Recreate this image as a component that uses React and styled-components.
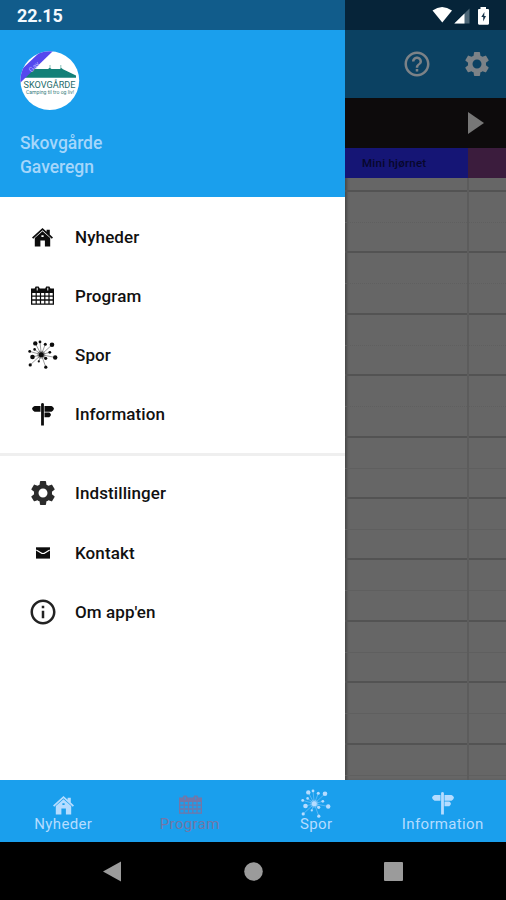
import React from "react";
import styled, { createGlobalStyle } from "styled-components";
import { MdSettings, MdHelpOutline, MdInfoOutline } from "react-icons/md";

const GlobalStyle = createGlobalStyle`
  * {
    box-sizing: border-box;
  }

  body {
    margin: 0;
    background: #000;
    font-family: Roboto, "Liberation Sans", sans-serif;
  }

  svg {
    display: block;
    flex: none;
  }
`;

const Screen = styled.div`
  width: 506px;
  height: 900px;
  display: flex;
  flex-direction: column;
  overflow: hidden;
`;

const StatusBar = styled.div`
  flex: none;
  height: 30px;
  display: grid;
  grid-template-columns: 345px 1fr;
`;

const Clock = styled.div`
  padding-left: 17px;
  background: #115c8b;
  color: #f4f9fd;
  font-size: 18px;
  font-weight: 700;
  line-height: 32px;
  letter-spacing: -0.2px;
`;

const StatusIcons = styled.div`
  display: flex;
  justify-content: flex-end;
  align-items: center;
  padding-right: 16px;
  background: #062439;
`;

const Main = styled.div`
  flex: none;
  height: 750px;
  display: flex;
`;

const Drawer = styled.div`
  flex: none;
  width: 345px;
  background: #fff;
`;

const DrawerHeader = styled.div`
  height: 167px;
  padding: 21px 20px 0;
  background: #1a9fed;
`;

const CampName = styled.div`
  margin-top: 20px;
  color: #a4d6fb;
  font-size: 17.5px;
  font-weight: 500;
  line-height: 24px;
  letter-spacing: -0.05px;
`;

const MenuGroup = styled.div`
  padding: 10.5px 0 9px;

  & + & {
    border-top: 3px solid #efefef;
    padding-top: 8px;
  }
`;

const MenuItem = styled.div`
  height: 59.1px;
  display: flex;
  align-items: center;
`;

const MenuIcon = styled.div`
  width: 75px;
  padding: 0 8px 0 18px;
  display: flex;
  justify-content: center;
  color: ${({ $color }) => $color || "#0c0c0c"};
`;

const MenuLabel = styled.div`
  color: #111;
  font-size: 17px;
  font-weight: 500;
  letter-spacing: 0.1px;
`;

const Page = styled.div`
  flex: 1;
  display: flex;
  flex-direction: column;
  overflow: hidden;
  box-shadow: inset 3px 0 3px -1px rgba(0, 0, 0, 0.3);
  background: #666;
`;

const AppBar = styled.div`
  height: 68px;
  display: flex;
  justify-content: flex-end;
  align-items: center;
  gap: 30px;
  padding-right: 14px;
  background: #0b4162;
  color: #7c8287;
`;

const DayBar = styled.div`
  height: 50px;
  display: flex;
  justify-content: flex-end;
  align-items: center;
  padding-right: 22px;
  background: #0d0b0c;
`;

const Rooms = styled.div`
  height: 30px;
  display: flex;
`;

const Room = styled.div`
  width: ${({ $width }) => $width};
  padding-left: 17px;
  background: ${({ $color }) => $color};
  color: #07072c;
  font-size: 11.5px;
  font-weight: 500;
  line-height: 31px;
  letter-spacing: 0.25px;
`;

const Schedule = styled.div`
  flex: 1;
  display: grid;
  grid-template-columns: 122px 1fr;
  overflow: hidden;
`;

const Track = styled.div`
  padding-top: 12px;
  overflow: hidden;

  & + & {
    border-left: 2px solid #5c5c5c;
  }
`;

const HourSlot = styled.div`
  height: 61.4px;
  border-top: 2px solid #535353;

  &::before {
    content: "";
    display: block;
    height: 30px;
    border-bottom: 1px ${({ $faint }) => ($faint ? "dotted" : "solid")} #5f5f5f;
  }
`;

const TabBar = styled.div`
  flex: none;
  height: 62px;
  display: grid;
  grid-template-columns: repeat(4, 1fr);
  background: #1a9fed;
`;

const Tab = styled.div`
  display: flex;
  flex-direction: column;
  align-items: center;
  color: ${({ $active }) => ($active ? "#7277a8" : "#b5dcff")};
`;

const TabIcon = styled.div`
  height: 34px;
  padding-top: ${({ $top }) => $top}px;
  padding-left: ${({ $left }) => $left || 0}px;
`;

const TabLabel = styled.div`
  font-size: 15px;
  line-height: 21px;
  letter-spacing: 0.35px;
`;

const SystemNav = styled.div`
  flex: none;
  height: 58px;
  display: grid;
  grid-template-columns: repeat(3, 140.7px);
  justify-content: center;
  align-items: center;
  justify-items: center;
  background: #000;
  color: #9b9b9b;
`;

const HomeIcon = () => (
  <svg width="21" height="19" viewBox="0 0 21 19" fill="currentColor">
    <path d="M10.5 0 L14.6 3.7 V1.8 H17.8 V6.6 L21 9.5 L19.8 10.7 L10.5 2.3 L1.2 10.7 L0 9.5 Z" />
    <path
      fillRule="evenodd"
      d="M10.5 3.2 L18.2 10 V18.5 H12.9 V12.6 H8.4 V18.5 H2.8 V10 Z M9.4 7.2 V9 H11.6 V7.2 Z"
    />
  </svg>
);

const CalendarIcon = () => (
  <svg width="23" height="20" viewBox="0 0 23 20" fill="currentColor">
    <path
      fillRule="evenodd"
      d="M0 2.6 H3.6 L4.6 0.4 H7.6 L8.8 2.6 H14.2 L15.2 0.4 H18.4 L19.4 2.6 H23 V18.8 H0 Z
      M1.3 7 V9.4 H4.6 V7 Z M5.8 7 V9.4 H8.9 V7 Z M10.1 7 V9.4 H13.2 V7 Z M14.4 7 V9.4 H17.4 V7 Z M18.6 7 V9.4 H21.7 V7 Z
      M1.3 10.8 V13.3 H4.6 V10.8 Z M5.8 10.8 V13.3 H8.9 V10.8 Z M10.1 10.8 V13.3 H13.2 V10.8 Z M14.4 10.8 V13.3 H17.4 V10.8 Z M18.6 10.8 V13.3 H21.7 V10.8 Z
      M1.3 14.7 V17.4 H4.6 V14.7 Z M5.8 14.7 V17.4 H8.9 V14.7 Z M10.1 14.7 V17.4 H13.2 V14.7 Z M14.4 14.7 V17.4 H17.4 V14.7 Z M18.6 14.7 V17.4 H21.7 V14.7 Z
      M5.7 1.8 V4.4 H6.7 V1.8 Z M16.3 1.8 V4.4 H17.3 V1.8 Z"
    />
  </svg>
);

// x, y, radius of each dot around the hub
const dots = [
  [7.3, 3.4, 2.2],
  [12, 1.9, 1.4],
  [17.3, 4.3, 1.5],
  [24, 4.8, 2.3],
  [1.7, 11.4, 1.4],
  [6.6, 9.4, 1.3],
  [21.8, 12.3, 1.4],
  [4.5, 17, 2.3],
  [27.2, 17.5, 2.2],
  [17.7, 18.3, 1.6],
  [2.2, 24.9, 1.6],
  [10.8, 21.4, 1.1],
  [17.8, 27.2, 1.6],
];

const BurstIcon = () => (
  <svg width="30" height="30" viewBox="0 0 30 30" fill="currentColor">
    {dots.map(([x, y, r]) => (
      <g key={`${x}-${y}`}>
        <line
          x1="13.3"
          y1="14.7"
          x2={x}
          y2={y}
          stroke="currentColor"
          strokeWidth="0.8"
          opacity="0.5"
        />
        <circle cx={x} cy={y} r={r} />
      </g>
    ))}
    <circle cx="13.3" cy="14.7" r="4" opacity="0.3" />
    <circle cx="13.3" cy="14.7" r="2.5" />
  </svg>
);

const SignIcon = () => (
  <svg width="22" height="23" viewBox="0 0 22 23" fill="currentColor">
    <path d="M9.1 0.8 Q10.5 -0.6 11.9 0.8 V22.5 H9.1 Z" />
    <path d="M2.6 3 H8.5 V8.7 H2.6 Q0.6 8 0 5.8 Q0.6 3.6 2.6 3 Z" />
    <path d="M12.5 3 H19.5 Q21.4 3.8 22 5.8 Q21.4 8 19.5 8.7 H12.5 Z" />
    <path d="M12.5 9.6 H17.3 Q18.7 10.4 19 11.8 Q18.7 13.3 17.3 14.2 H12.5 Z" />
  </svg>
);

const MailIcon = () => (
  <svg width="14" height="12" viewBox="0 0 14 12" fill="currentColor">
    <rect width="14" height="11.3" y="0.3" />
    <path d="M0.3 3 L4.8 5.7 Q7 7.3 9.2 5.7 L13.7 3" fill="none" stroke="#fff" strokeWidth="1.1" />
  </svg>
);

const Logo = () => (
  <svg width="60" height="60" viewBox="0 0 60 60">
    <defs>
      <clipPath id="logoClip">
        <circle cx="29.8" cy="29.6" r="29.4" />
      </clipPath>
    </defs>
    <g clipPath="url(#logoClip)">
      <rect width="60" height="60" fill="#fff" />
      <path
        d="M3 26.8 L14 18 H28 L29.8 16.8 L31.5 18 H40 L41 16.8 L43 18.3 L56 24.5 V26.8 Z"
        fill="#138078"
      />
      <path d="M30 17 V14 M40.8 17 V14" stroke="#6cb0a8" strokeWidth="0.8" />
      <path d="M0 20 L21 0 H33 L0 32 Z" fill="#5548ee" />
      <text x="8" y="19" fill="#b9b5ff" fontSize="7" transform="rotate(-45 13 16)">
        Gav
      </text>
      <text
        x="3.5"
        y="37.2"
        fill="#266b6b"
        fontSize="9.4"
        textLength="52"
        lengthAdjust="spacingAndGlyphs"
      >
        SKOVGÅRDE
      </text>
      <text
        x="6"
        y="43.2"
        fill="#397d7d"
        fontSize="5.4"
        textLength="48"
        lengthAdjust="spacingAndGlyphs"
      >
        Camping til tro og liv!
      </text>
    </g>
  </svg>
);

const SignalIcons = () => (
  <svg width="58" height="20" viewBox="0 0 58 20">
    <path d="M0.5 4.4 Q10 -2.6 20 4.4 L10.3 16.6 Z" fill="#fff" />
    <path d="M37.5 2.4 V17.6 H22.3 Z" fill="#4d6677" />
    <path d="M32.5 7.4 V17.6 H22.3 Z" fill="#fff" />
    <path
      d="M48.5 1 H54 V3 H56 Q57 3 57 4 V17.6 Q57 18.7 56 18.7 H47 Q46 18.7 46 17.6 V4 Q46 3 47 3 H48.5 Z"
      fill="#fff"
    />
    <path d="M52.4 6 L49.3 11 H51.2 V15.4 L54 10 H52.2 Z" fill="#17344a" />
  </svg>
);

const mainMenu = [
  { label: "Nyheder", icon: <HomeIcon /> },
  { label: "Program", icon: <CalendarIcon /> },
  { label: "Spor", icon: <BurstIcon /> },
  { label: "Information", icon: <SignIcon /> },
];

const extraMenu = [
  { label: "Indstillinger", icon: <MdSettings size={30} />, color: "#2b2b2b" },
  { label: "Kontakt", icon: <MailIcon /> },
  { label: "Om app'en", icon: <MdInfoOutline size={30} />, color: "#222" },
];

const tabs = [
  { label: "Nyheder", icon: <HomeIcon />, top: 16 },
  { label: "Program", icon: <CalendarIcon />, top: 15, left: 2, active: true },
  { label: "Spor", icon: <BurstIcon />, top: 9 },
  { label: "Information", icon: <SignIcon />, top: 11.5 },
];

const hours = [0, 1, 2, 3, 4, 5, 6, 7, 8, 9];

const Menu = ({ items }) => (
  <MenuGroup>
    {items.map((item) => (
      <MenuItem key={item.label}>
        <MenuIcon $color={item.color}>{item.icon}</MenuIcon>
        <MenuLabel>{item.label}</MenuLabel>
      </MenuItem>
    ))}
  </MenuGroup>
);

const App = () => {
  return (
    <>
      <GlobalStyle />
      <Screen>
        <StatusBar>
          <Clock>22.15</Clock>
          <StatusIcons>
            <SignalIcons />
          </StatusIcons>
        </StatusBar>

        <Main>
          <Drawer>
            <DrawerHeader>
              <Logo />
              <CampName>
                Skovgårde
                <br />
                Gaveregn
              </CampName>
            </DrawerHeader>
            <Menu items={mainMenu} />
            <Menu items={extraMenu} />
          </Drawer>

          <Page>
            <AppBar>
              <MdHelpOutline size={30} />
              <MdSettings size={30} />
            </AppBar>
            <DayBar>
              <svg width="16" height="22" viewBox="0 0 16 22">
                <path d="M0 0 L16 11 L0 22 Z" fill="#777" />
              </svg>
            </DayBar>
            <Rooms>
              <Room $width="123px" $color="#151575">
                Mini hjørnet
              </Room>
              <Room $width="38px" $color="#3b1c3d" />
            </Rooms>
            <Schedule>
              {["mini", "next"].map((track) => (
                <Track key={track}>
                  {hours.map((hour) => (
                    <HourSlot key={hour} $faint={hour < 4} />
                  ))}
                </Track>
              ))}
            </Schedule>
          </Page>
        </Main>

        <TabBar>
          {tabs.map((tab) => (
            <Tab key={tab.label} $active={tab.active}>
              <TabIcon $top={tab.top} $left={tab.left}>
                {tab.icon}
              </TabIcon>
              <TabLabel>{tab.label}</TabLabel>
            </Tab>
          ))}
        </TabBar>

        <SystemNav>
          <svg width="18" height="21" viewBox="0 0 18 21">
            <path d="M18 0.5 V20.5 L0 10.5 Z" fill="currentColor" />
          </svg>
          <svg width="19" height="19" viewBox="0 0 19 19">
            <circle cx="9.5" cy="9.5" r="9.3" fill="currentColor" />
          </svg>
          <svg width="19" height="19" viewBox="0 0 19 19">
            <rect width="19" height="19" rx="1" fill="currentColor" />
          </svg>
        </SystemNav>
      </Screen>
    </>
  );
};

export default App;
